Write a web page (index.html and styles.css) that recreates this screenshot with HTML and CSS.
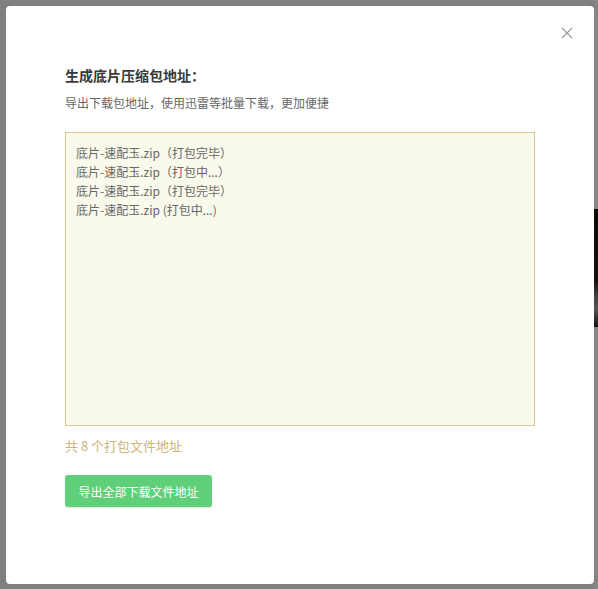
FILE: index.html
```html
<!DOCTYPE html>
<html lang="zh-CN">
<head>
<meta charset="utf-8">
<title>生成底片压缩包地址</title>
<link rel="stylesheet" href="styles.css">
</head>
<body>
<div class="backdrop-strip"><div class="strip-photo"></div></div>
<div class="overlay">
  <div class="modal">
    <button class="close" aria-label="关闭">
      <svg width="12" height="12" viewBox="0 0 12 12"><path d="M1 1L11 11M11 1L1 11" stroke="#999" stroke-width="1.2" fill="none"/></svg>
    </button>
    <h2 class="title">生成底片压缩包地址：</h2>
    <p class="subtitle">导出下载包地址，使用迅雷等批量下载，更加便捷</p>
    <div class="list">
      <div class="line">底片-速配玉.zip（打包完毕）</div>
      <div class="line">底片-速配玉.zip（打包中...）</div>
      <div class="line">底片-速配玉.zip（打包完毕）</div>
      <div class="line">底片-速配玉.zip (打包中...)</div>
    </div>
    <p class="count">共 8 个打包文件地址</p>
    <button class="export">导出全部下载文件地址</button>
  </div>
</div>
</body>
</html>
```
FILE: styles.css
```css
html, body {
  margin: 0;
  padding: 0;
  height: 100%;
}
body {
  background: #7f7f7f;
  font-family: "Noto Sans CJK SC", "Noto Sans", sans-serif;
  position: relative;
  overflow: hidden;
}
.backdrop-strip {
  position: absolute;
  right: 0;
  top: 0;
  width: 4px;
  height: 100%;
  background: #858585;
}
.strip-photo {
  position: absolute;
  top: 209px;
  left: 0;
  width: 4px;
  height: 118px;
  background: linear-gradient(#0d0b08 0%, #15110c 60%, #444 75%, #555 85%, #121212 100%);
}
.overlay {
  position: relative;
  padding: 6px 4px 5px 6px;
  height: 100%;
  box-sizing: border-box;
}
.modal {
  position: relative;
  background: #fff;
  border-radius: 4px;
  height: 100%;
  box-sizing: border-box;
  padding: 60px 59px 0 59px;
}
.close {
  position: absolute;
  top: 21px;
  right: 21px;
  width: 12px;
  height: 12px;
  padding: 0;
  border: 0;
  background: none;
  display: flex;
}
.title {
  margin: 0;
  font-size: 14px;
  line-height: 18px;
  font-weight: 600;
  color: #3a3a3a;
}
.subtitle {
  margin: 10px 0 0;
  font-size: 12px;
  line-height: 18px;
  color: #666;
}
.list {
  margin-top: 20px;
  height: 294px;
  box-sizing: border-box;
  border: 1px solid #d9c88f;
  background: #f9faec;
  padding: 10px 10px;
}
.line {
  font-size: 12px;
  line-height: 19px;
  color: #666;
}
.count {
  margin: 10px 0 0;
  font-size: 13px;
  line-height: 20px;
  color: #cdb57a;
}
.export {
  margin-top: 19px;
  height: 32px;
  width: 147px;
  padding: 0;
  border: 0;
  border-radius: 3px;
  background: #60cf7a;
  color: #fff;
  font-family: inherit;
  font-size: 12px;
  box-shadow: 0 1px 2px rgba(0,0,0,0.12);
}
```
